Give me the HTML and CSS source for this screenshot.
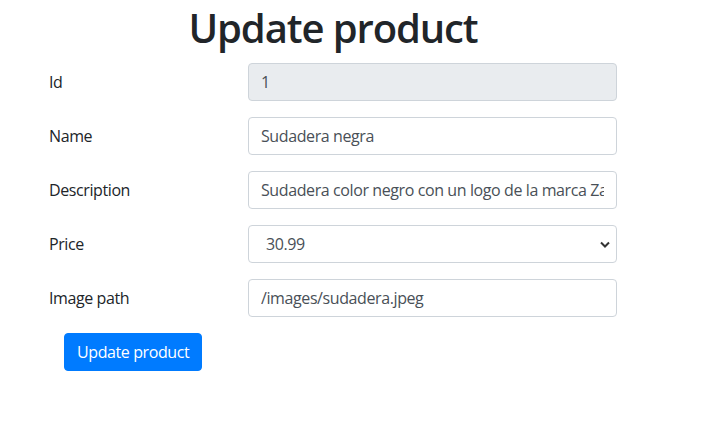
FILE: index.html
```html
<!DOCTYPE html>
<html lang="es">
<head>
<meta charset="utf-8">
<title>Update product</title>
<link rel="stylesheet" href="styles.css">
</head>
<body>
<div class="page">
  <h1 class="title">Update product</h1>
  <form class="form">
    <div class="row">
      <label class="label" for="id">Id</label>
      <input class="control readonly" id="id" type="text" value="1" readonly>
    </div>
    <div class="row">
      <label class="label" for="name">Name</label>
      <input class="control" id="name" type="text" value="Sudadera negra">
    </div>
    <div class="row">
      <label class="label" for="desc">Description</label>
      <input class="control" id="desc" type="text" value="Sudadera color negro con un logo de la marca Zara en el pecho">
    </div>
    <div class="row">
      <label class="label" for="price">Price</label>
      <select class="control select" id="price">
        <option>30.99</option>
      </select>
    </div>
    <div class="row">
      <label class="label" for="img">Image path</label>
      <input class="control" id="img" type="text" value="/images/sudadera.jpeg">
    </div>
    <div class="actions">
      <button class="btn" type="submit">Update product</button>
    </div>
  </form>
</div>
</body>
</html>
```
FILE: styles.css
```css
html, body {
  margin: 0;
  padding: 0;
  background: #fff;
}
body {
  font-family: "Open Sans", "Noto Sans", sans-serif;
  font-size: 16px;
  letter-spacing: -0.4px;
  color: #212529;
}
.page {
  width: 666px;
}
.title {
  margin: 0 0 8px;
  text-align: center;
  font-size: 40px;
  font-weight: 600;
  letter-spacing: -1.1px;
  line-height: 55px;
  color: #212529;
}
.form {
  display: flex;
  flex-direction: column;
  gap: 16px;
  padding-left: 49px;
}
.row {
  display: flex;
  align-items: center;
}
.label {
  width: 199px;
  line-height: 24px;
}
.control {
  box-sizing: border-box;
  width: 369px;
  height: 38px;
  padding: 6px 12px;
  border: 1px solid #ced4da;
  border-radius: 4px;
  background: #fff;
  font-family: inherit;
  font-size: 16px;
  letter-spacing: -0.4px;
  color: #495057;
  outline: none;
}
.readonly {
  background: #e9ecef;
}
.select {
  appearance: none;
  -webkit-appearance: none;
  padding-left: 17px;
  background-image: url("data:image/svg+xml,%3Csvg xmlns='http://www.w3.org/2000/svg' width='10' height='7' viewBox='0 0 10 7'%3E%3Cpath d='M1 1.5l4 4 4-4' fill='none' stroke='%23333' stroke-width='2'/%3E%3C/svg%3E");
  background-repeat: no-repeat;
  background-position: right 6px center;
}
.actions {
  padding-left: 15px;
}
.btn {
  height: 38px;
  padding: 6px 12px;
  border: 1px solid #007bff;
  border-radius: 4px;
  background: #007bff;
  color: #fff;
  font-family: inherit;
  font-size: 16px;
  letter-spacing: -0.4px;
  line-height: 24px;
}
```
